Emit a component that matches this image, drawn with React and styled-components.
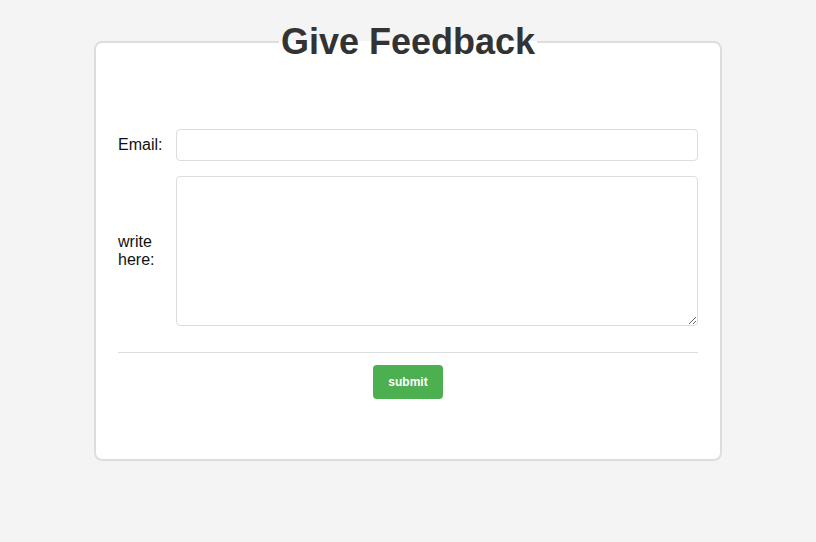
import React from 'react';
import styled, { createGlobalStyle } from 'styled-components';

const GlobalStyle = createGlobalStyle`
  html, body {
    margin: 0;
    padding: 0;
    background: #f4f4f4;
    font-family: "Liberation Sans", Arial, sans-serif;
  }
`;

const Page = styled.div`
  padding-top: 21px;
  display: flex;
  justify-content: center;
`;

const Card = styled.fieldset`
  box-sizing: border-box;
  width: 628px;
  margin: 0;
  padding: 66px 22px 60px;
  background: #fff;
  border: 2px solid #ddd;
  border-radius: 8px;
  min-width: 0;
`;

const Title = styled.legend`
  margin: 0 auto;
  padding: 0 2px;
  font-size: 36px;
  font-weight: bold;
  color: #333;
`;

const Fields = styled.div`
  display: grid;
  grid-template-columns: 58px 1fr;
  row-gap: 15px;
  align-items: center;
`;

const Label = styled.label`
  font-size: 16px;
  line-height: 18px;
  color: #111;
  padding-right: 8px;
`;

const Input = styled.input`
  box-sizing: border-box;
  width: 100%;
  height: 32px;
  margin: 0;
  border: 1px solid #ddd;
  border-radius: 4px;
  padding: 6px 8px;
  font-size: 14px;
  font-family: inherit;
  outline: none;
`;

const TextArea = styled.textarea`
  box-sizing: border-box;
  display: block;
  width: 100%;
  height: 150px;
  margin: 0;
  border: 1px solid #ddd;
  border-radius: 4px;
  padding: 6px 8px;
  font-size: 14px;
  font-family: inherit;
  outline: none;
`;

const Divider = styled.hr`
  margin: 26px 0 12px;
  border: none;
  border-top: 1px solid #ddd;
`;

const Actions = styled.div`
  display: flex;
  justify-content: center;
`;

const SubmitButton = styled.button`
  background: #4caf50;
  color: #fff;
  border: none;
  border-radius: 4px;
  padding: 10px 15px;
  font-family: inherit;
  font-size: 12px;
  line-height: 14px;
  font-weight: bold;
  cursor: pointer;
`;

function App() {
  return (
    <>
      <GlobalStyle />
      <Page>
        <Card>
          <Title>Give Feedback</Title>
          <Fields>
            <Label htmlFor="email">Email:</Label>
            <Input id="email" type="email" />
            <Label htmlFor="message">write here:</Label>
            <TextArea id="message" />
          </Fields>
          <Divider />
          <Actions>
            <SubmitButton type="button">submit</SubmitButton>
          </Actions>
        </Card>
      </Page>
    </>
  );
}

export default App;
